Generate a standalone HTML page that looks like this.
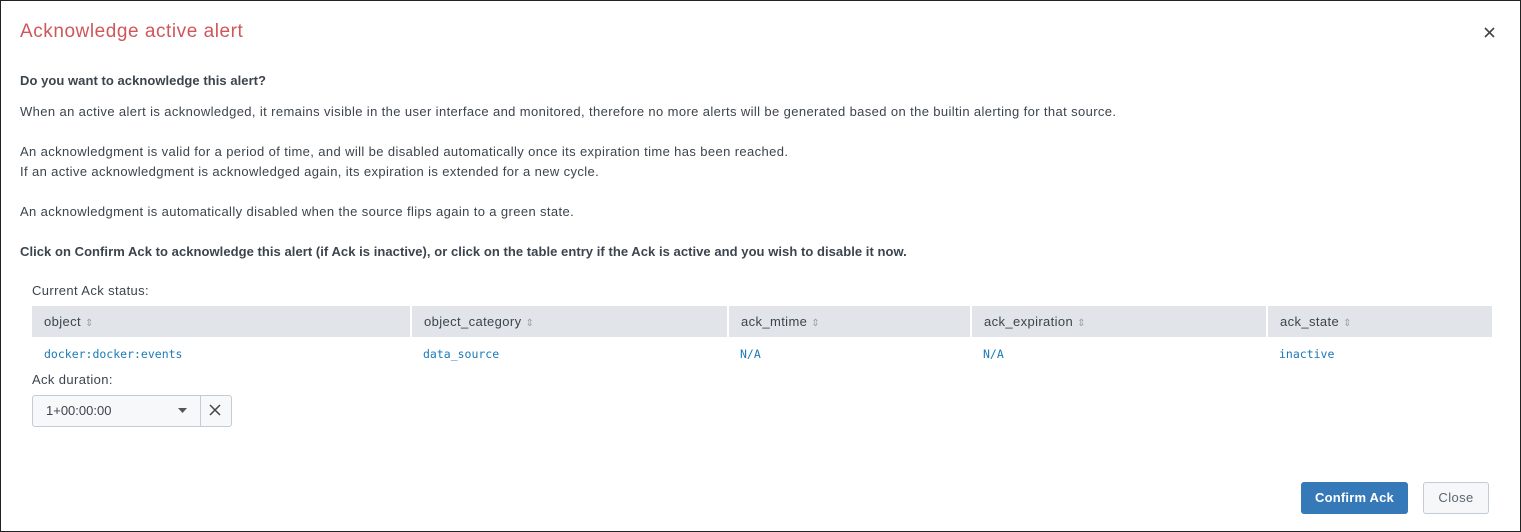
<!DOCTYPE html><html><head><style>
body{margin:0;width:1521px;height:532px;overflow:hidden;background:#fff;font-family:"Liberation Sans",sans-serif;color:#3c444d;font-size:13px;letter-spacing:0.38px}
.f{position:absolute;left:0;top:0;width:1519px;height:530px;border:1px solid #222}
.a{position:absolute;white-space:nowrap}
.b{font-weight:bold;letter-spacing:0.05px}
.th{position:absolute;top:306px;height:31px;background:#e1e5e9;line-height:31px;padding-left:12px;box-sizing:border-box}
.th span{color:#9aa2aa;font-size:10px;margin-left:4px}
.td{position:absolute;top:345px;font-family:"DejaVu Sans Mono","Liberation Mono",monospace;font-size:11.5px;letter-spacing:0;color:#1a7ab8;line-height:18px}
</style></head><body><div class="f"></div>
<div class="a" style="left:20px;top:21px;font-size:19px;letter-spacing:0.55px;color:#d0565a">Acknowledge active alert</div>
<svg class="a" style="left:1484px;top:27px" width="11" height="11" viewBox="0 0 11 11"><path d="M1 1L10 10M10 1L1 10" stroke="#444" stroke-width="1.6"/></svg>
<div class="a b" style="left:20px;top:73px">Do you want to acknowledge this alert?</div>
<div class="a" style="left:20px;top:104px">When an active alert is acknowledged, it remains visible in the user interface and monitored, therefore no more alerts will be generated based on the builtin alerting for that source.</div>
<div class="a" style="left:20px;top:144px">An acknowledgment is valid for a period of time, and will be disabled automatically once its expiration time has been reached.</div>
<div class="a" style="left:20px;top:164px">If an active acknowledgment is acknowledged again, its expiration is extended for a new cycle.</div>
<div class="a" style="left:20px;top:204px">An acknowledgment is automatically disabled when the source flips again to a green state.</div>
<div class="a b" style="left:20px;top:244px">Click on Confirm Ack to acknowledge this alert (if Ack is inactive), or click on the table entry if the Ack is active and you wish to disable it now.</div>
<div class="a" style="left:32px;top:283px">Current Ack status:</div>
<div class="th" style="left:32px;width:378px">object<span>⇕</span></div>
<div class="th" style="left:412px;width:315px">object_category<span>⇕</span></div>
<div class="th" style="left:729px;width:241px">ack_mtime<span>⇕</span></div>
<div class="th" style="left:972px;width:294px">ack_expiration<span>⇕</span></div>
<div class="th" style="left:1268px;width:224px">ack_state<span>⇕</span></div>
<div class="td" style="left:44px">docker:docker:events</div>
<div class="td" style="left:423px">data_source</div>
<div class="td" style="left:740px">N/A</div>
<div class="td" style="left:983px">N/A</div>
<div class="td" style="left:1279px">inactive</div>
<div class="a" style="left:32px;top:372px">Ack duration:</div>
<div class="a" style="left:32px;top:395px;width:198px;height:30px;border:1px solid #c3cbd4;border-radius:3px;background:#f7f8fa"></div>
<div class="a" style="left:200px;top:396px;width:1px;height:30px;background:#c3cbd4"></div>
<div class="a" style="left:46px;top:403px;letter-spacing:0">1+00:00:00</div>
<svg class="a" style="left:178px;top:408px" width="9" height="5"><path d="M0 0H9L4.5 5Z" fill="#555"/></svg>
<svg class="a" style="left:209px;top:404px" width="12" height="12" viewBox="0 0 12 12"><path d="M1 1L11 11M11 1L1 11" stroke="#444" stroke-width="1.5"/></svg>
<div class="a" style="left:1301px;top:482px;width:107px;height:32px;background:#3579b8;border-radius:3px;color:#fff;font-weight:bold;text-align:center;line-height:32px;letter-spacing:0.2px">Confirm Ack</div>
<div class="a" style="left:1423px;top:482px;width:64px;height:30px;background:#f5f7f9;border:1px solid #c3cbd4;border-radius:3px;color:#5c6773;text-align:center;line-height:30px">Close</div>
</body></html>
